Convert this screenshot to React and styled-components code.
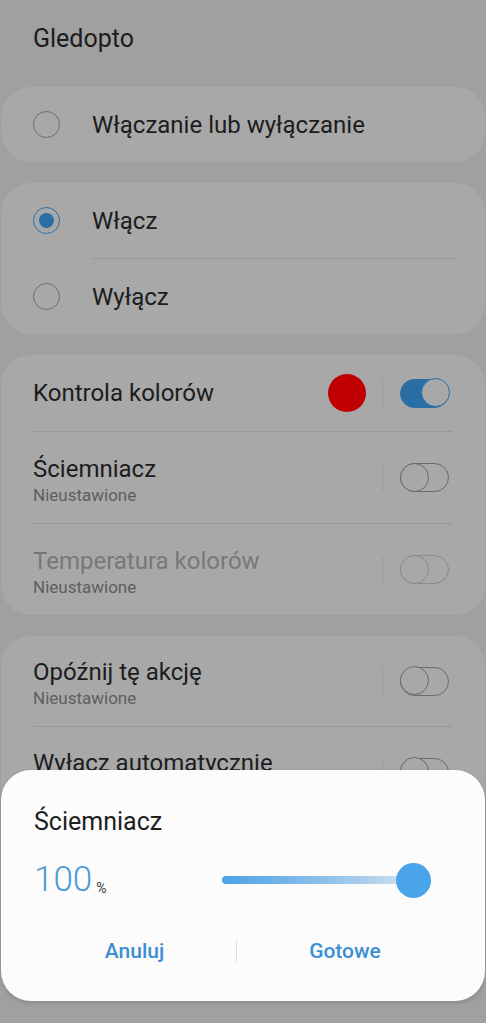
import React from 'react';
import styled, { createGlobalStyle } from 'styled-components';

const GlobalStyle = createGlobalStyle`
  html, body {
    margin: 0;
    padding: 0;
    background: #9b9b9b;
  }
  body {
    font-family: Roboto, "Noto Sans", "Liberation Sans", sans-serif;
  }
`;

const Screen = styled.div`
  position: relative;
  width: 486px;
  height: 1023px;
  overflow: hidden;
  background: #a0a0a0;
`;

const Header = styled.h1`
  margin: 0;
  padding: 24px 33px 0;
  height: 87px;
  box-sizing: border-box;
  font-size: 25px;
  line-height: 30px;
  font-weight: 400;
  color: #1c1c1c;
`;

const CardList = styled.div`
  display: flex;
  flex-direction: column;
  gap: 21px;
  padding: 0 1px;
`;

const Card = styled.div`
  background: #a8a8a8;
  border-radius: 30px;
  overflow: hidden;
`;

const RadioRow = styled.div`
  display: flex;
  align-items: center;
  height: 75px;
  padding-left: 32px;
  box-sizing: border-box;
`;

const RadioCircle = styled.span`
  width: 27px;
  height: 27px;
  box-sizing: border-box;
  border-radius: 50%;
  border: 1.5px solid ${(p) => (p.checked ? '#2a6ea6' : '#6c6c6c')};
  display: flex;
  align-items: center;
  justify-content: center;
  flex-shrink: 0;

  &::after {
    content: '';
    display: ${(p) => (p.checked ? 'block' : 'none')};
    width: 15px;
    height: 15px;
    border-radius: 50%;
    background: #2a6ea6;
  }
`;

const RadioLabel = styled.span`
  margin-left: 32px;
  font-size: 24px;
  color: #1c1c1c;
`;

const RadioDivider = styled.div`
  height: 1px;
  background: #989898;
  margin: 0 27px 0 91px;
`;

const SettingRow = styled.div`
  display: flex;
  align-items: center;
  height: ${(p) => p.height}px;
  padding: 0 36px 0 32px;
  box-sizing: border-box;
`;

const RowText = styled.div`
  flex: 1;
  display: flex;
  flex-direction: column;
  padding-top: ${(p) => (p.withSub ? '5px' : '0')};
`;

const RowTitle = styled.span`
  font-size: 24px;
  line-height: 29px;
  color: ${(p) => (p.disabled ? '#787878' : '#1c1c1c')};
`;

const RowSub = styled.span`
  font-size: 17px;
  line-height: 22px;
  color: #5e5e5e;
`;

const RowDivider = styled.div`
  height: 1px;
  background: #989898;
  margin: 0 32px;
`;

const ColorDot = styled.span`
  width: 38px;
  height: 38px;
  border-radius: 50%;
  background: #c00000;
  margin-right: 16px;
`;

const VDivider = styled.span`
  width: 1px;
  height: 28px;
  background: #9a9a9a;
  margin-right: 17px;
`;

const Toggle = styled.span`
  position: relative;
  width: 49px;
  height: 29px;
  box-sizing: border-box;
  border-radius: 15px;
  border: 1.5px solid ${(p) => (p.on ? '#2a6ea6' : p.disabled ? '#8a8a8a' : '#6a6a6a')};
  background: ${(p) => (p.on ? '#2a6ea6' : 'transparent')};

  &::after {
    content: '';
    position: absolute;
    top: -1.5px;
    ${(p) => (p.on ? 'right: -1.5px;' : 'left: -1.5px;')}
    width: 29px;
    height: 29px;
    box-sizing: border-box;
    border-radius: 50%;
    border: 1.5px solid ${(p) => (p.on ? '#2a6ea6' : p.disabled ? '#8a8a8a' : '#6a6a6a')};
    background: #a8a8a8;
  }
`;

const Dialog = styled.div`
  position: absolute;
  left: 1px;
  right: 1px;
  top: 770px;
  height: 231px;
  background: #fcfcfc;
  border-radius: 30px;
  box-shadow: 0 2px 4px rgba(0, 0, 0, 0.15);
  padding: 37px 32px 0 33px;
  box-sizing: border-box;
  display: flex;
  flex-direction: column;
`;

const DialogTitle = styled.div`
  font-size: 25px;
  line-height: 30px;
  color: #202020;
`;

const ValueRow = styled.div`
  display: flex;
  align-items: center;
  margin-top: 26px;
  height: 34px;
`;

const Value = styled.span`
  font-size: 35px;
  font-weight: 300;
  color: #4a9ad8;
  line-height: 34px;
`;

const Unit = styled.span`
  font-size: 14px;
  color: #333;
  margin-left: 4px;
  align-self: flex-end;
  margin-bottom: 1px;
`;

const SliderTrack = styled.div`
  position: relative;
  margin-left: auto;
  width: 192px;
  height: 8px;
  border-radius: 4px;
  background: linear-gradient(90deg, #4ea2e6 0%, #8fc1ea 55%, #d2e2ee 100%);
  margin-right: 39px;
`;

const SliderThumb = styled.span`
  position: absolute;
  right: -17px;
  top: 50%;
  width: 35px;
  height: 35px;
  margin-top: -17.5px;
  border-radius: 50%;
  background: #4aa4ea;
`;

const ButtonRow = styled.div`
  display: grid;
  grid-template-columns: 203px 1px 1fr;
  align-items: center;
  margin-top: 42px;
  margin-left: -1px;
`;

const DialogButton = styled.button`
  background: none;
  border: none;
  padding: 0;
  font-family: inherit;
  font-size: 21px;
  font-weight: 500;
  color: #3b8fd2;
  text-align: center;
`;

const ButtonDivider = styled.span`
  width: 1px;
  height: 22px;
  background: #e0e0e0;
`;

const settings = [
  { title: 'Ściemniacz', sub: 'Nieustawione' },
  { title: 'Temperatura kolorów', sub: 'Nieustawione', disabled: true },
];

const App = () => (
  <>
    <GlobalStyle />
    <Screen>
      <Header>Gledopto</Header>
      <CardList>
        <Card>
          <RadioRow>
            <RadioCircle />
            <RadioLabel>Włączanie lub wyłączanie</RadioLabel>
          </RadioRow>
        </Card>
        <Card>
          <RadioRow>
            <RadioCircle checked />
            <RadioLabel>Włącz</RadioLabel>
          </RadioRow>
          <RadioDivider />
          <RadioRow>
            <RadioCircle />
            <RadioLabel>Wyłącz</RadioLabel>
          </RadioRow>
        </Card>
        <Card>
          <SettingRow height={76}>
            <RowText>
              <RowTitle>Kontrola kolorów</RowTitle>
            </RowText>
            <ColorDot />
            <VDivider />
            <Toggle on />
          </SettingRow>
          {settings.map((s) => (
            <React.Fragment key={s.title}>
              <RowDivider />
              <SettingRow height={91}>
                <RowText withSub>
                  <RowTitle disabled={s.disabled}>{s.title}</RowTitle>
                  <RowSub>{s.sub}</RowSub>
                </RowText>
                <VDivider />
                <Toggle disabled={s.disabled} />
              </SettingRow>
            </React.Fragment>
          ))}
        </Card>
        <Card>
          <SettingRow height={90}>
            <RowText withSub>
              <RowTitle>Opóźnij tę akcję</RowTitle>
              <RowSub>Nieustawione</RowSub>
            </RowText>
            <VDivider />
            <Toggle />
          </SettingRow>
          <RowDivider />
          <SettingRow height={90}>
            <RowText withSub>
              <RowTitle>Wyłacz automatycznie</RowTitle>
              <RowSub>Nieustawione</RowSub>
            </RowText>
            <VDivider />
            <Toggle />
          </SettingRow>
        </Card>
      </CardList>
      <Dialog>
        <DialogTitle>Ściemniacz</DialogTitle>
        <ValueRow>
          <Value>100</Value>
          <Unit>%</Unit>
          <SliderTrack>
            <SliderThumb />
          </SliderTrack>
        </ValueRow>
        <ButtonRow>
          <DialogButton>Anuluj</DialogButton>
          <ButtonDivider />
          <DialogButton>Gotowe</DialogButton>
        </ButtonRow>
      </Dialog>
    </Screen>
  </>
);

export default App;
